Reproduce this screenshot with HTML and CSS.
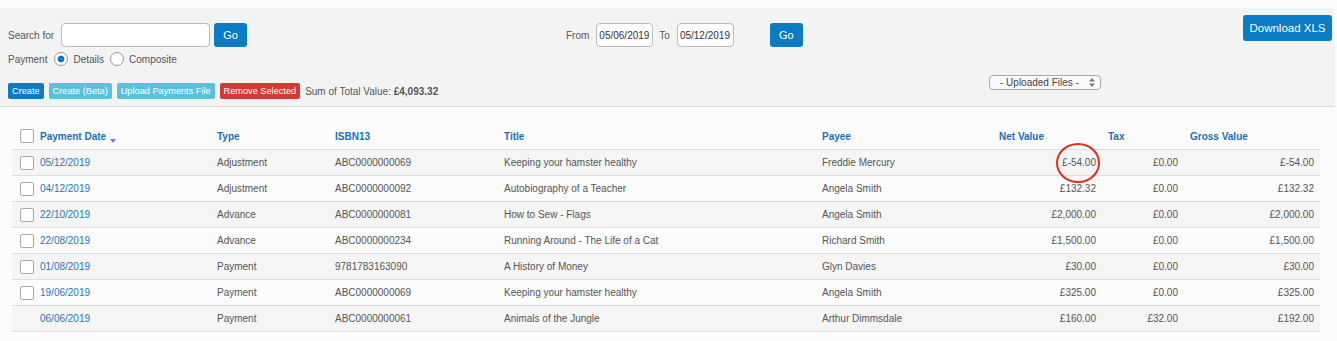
FILE: index.html
```html
<!DOCTYPE html>
<html lang="en">

<head>
    <meta charset="UTF-8" />
    <meta name="viewport" content="width=device-width, initial-scale=1.0" />
    <title>Payments</title>
    <link rel="stylesheet" href="styles.css">
</head>

<body>
    <div class="panel">
        <div class="panel-top">
            <div class="search-block">
                <div class="search-row">
                    <label class="lbl">Search for</label>
                    <input type="text" class="search-input">
                    <button class="go">Go</button>
                </div>
                <div class="payment-row">
                    <span class="lbl">Payment</span>
                    <span class="radio checked"></span>
                    <span class="radio-label">Details</span>
                    <span class="radio"></span>
                    <span class="radio-label">Composite</span>
                </div>
            </div>
            <div class="date-block">
                <span class="lbl">From</span>
                <input type="text" class="date-input" value="05/06/2019">
                <span class="lbl">To</span>
                <input type="text" class="date-input" value="05/12/2019">
                <button class="go go-dates">Go</button>
            </div>
            <button class="download">Download XLS</button>
        </div>
        <div class="panel-bottom">
            <div class="actions">
                <button class="btn create">Create</button>
                <button class="btn info">Create (Beta)</button>
                <button class="btn info">Upload Payments File</button>
                <button class="btn remove">Remove Selected</button>
                <span class="sum">Sum of Total Value: <b>£4,093.32</b></span>
            </div>
            <div class="uploaded">
                <span>- Uploaded Files -</span>
                <svg width="6" height="9" viewBox="0 0 6 9"><path d="M3 0L6 3.5H0z M3 9L0 5.5H6z" fill="#777"/></svg>
            </div>
        </div>
    </div>

    <table class="payments">
        <colgroup>
            <col style="width:199px">
            <col style="width:118px">
            <col style="width:169px">
            <col style="width:318px">
            <col style="width:177px">
            <col style="width:109px">
            <col style="width:82px">
            <col style="width:136px">
        </colgroup>
        <thead>
            <tr>
                <th class="first"><span class="check"></span>Payment Date <span class="sort"></span></th>
                <th>Type</th>
                <th>ISBN13</th>
                <th>Title</th>
                <th>Payee</th>
                <th>Net Value</th>
                <th>Tax</th>
                <th>Gross Value</th>
            </tr>
        </thead>
        <tbody>
            <tr>
                <td class="first"><span class="check"></span><a href="#">05/12/2019</a></td>
                <td>Adjustment</td>
                <td>ABC0000000069</td>
                <td>Keeping your hamster healthy</td>
                <td>Freddie Mercury</td>
                <td class="num marked">£-54.00<span class="ring"></span></td>
                <td class="num">£0.00</td>
                <td class="num">£-54.00</td>
            </tr>
            <tr>
                <td class="first"><span class="check"></span><a href="#">04/12/2019</a></td>
                <td>Adjustment</td>
                <td>ABC0000000092</td>
                <td>Autobiography of a Teacher</td>
                <td>Angela Smith</td>
                <td class="num">£132.32</td>
                <td class="num">£0.00</td>
                <td class="num">£132.32</td>
            </tr>
            <tr>
                <td class="first"><span class="check"></span><a href="#">22/10/2019</a></td>
                <td>Advance</td>
                <td>ABC0000000081</td>
                <td>How to Sew - Flags</td>
                <td>Angela Smith</td>
                <td class="num">£2,000.00</td>
                <td class="num">£0.00</td>
                <td class="num">£2,000.00</td>
            </tr>
            <tr>
                <td class="first"><span class="check"></span><a href="#">22/08/2019</a></td>
                <td>Advance</td>
                <td>ABC0000000234</td>
                <td>Running Around - The Life of a Cat</td>
                <td>Richard Smith</td>
                <td class="num">£1,500.00</td>
                <td class="num">£0.00</td>
                <td class="num">£1,500.00</td>
            </tr>
            <tr>
                <td class="first"><span class="check"></span><a href="#">01/08/2019</a></td>
                <td>Payment</td>
                <td>9781783163090</td>
                <td>A History of Money</td>
                <td>Glyn Davies</td>
                <td class="num">£30.00</td>
                <td class="num">£0.00</td>
                <td class="num">£30.00</td>
            </tr>
            <tr>
                <td class="first"><span class="check"></span><a href="#">19/06/2019</a></td>
                <td>Payment</td>
                <td>ABC0000000069</td>
                <td>Keeping your hamster healthy</td>
                <td>Angela Smith</td>
                <td class="num">£325.00</td>
                <td class="num">£0.00</td>
                <td class="num">£325.00</td>
            </tr>
            <tr>
                <td class="first"><span class="check blank"></span><a href="#">06/06/2019</a></td>
                <td>Payment</td>
                <td>ABC0000000061</td>
                <td>Animals of the Jungle</td>
                <td>Arthur Dimmsdale</td>
                <td class="num">£160.00</td>
                <td class="num">£32.00</td>
                <td class="num">£192.00</td>
            </tr>
        </tbody>
    </table>
</body>

</html>
```

FILE: styles.css
```css
body {
    margin: 0;
    background-color: #fcfcfc;
    font-family: "Liberation Sans", Arial, sans-serif;
    font-size: 10px;
    color: #555;
}

.panel {
    margin: 8px 2px 0 0;
    padding: 7px 3px 7px 8px;
    background-color: #f3f3f3;
    border-bottom: 1px solid #dadada;
    border-radius: 0 4px 0 0;
}

.panel-top {
    display: flex;
    align-items: flex-start;
}

.search-block {
    margin-top: 8px;
    width: 558px;
}

.search-row,
.payment-row,
.date-block {
    display: flex;
    align-items: center;
}

.lbl {
    margin-right: 7px;
}

.search-input {
    box-sizing: border-box;
    width: 149px;
    height: 24px;
    margin: 0 4px 0 0;
    border: 1px solid #bbb;
    border-radius: 4px;
    background: #fff;
}

.go {
    width: 33px;
    height: 24px;
    padding: 0;
    border: none;
    border-radius: 3px;
    background-color: #0a7bc4;
    color: white;
    font-family: inherit;
    font-size: 11px;
}

.payment-row {
    margin-top: 5px;
    height: 14px;
}

.payment-row .lbl {
    margin-right: 7px;
}

.radio {
    box-sizing: border-box;
    width: 14px;
    height: 14px;
    border: 1px solid #999;
    border-radius: 50%;
    background: #fff;
    margin-right: 5px;
}

.radio.checked {
    background: radial-gradient(circle, #0a7bc4 0 3.2px, #fff 3.7px);
}

.radio-label {
    margin-right: 6px;
}

.date-block {
    margin-top: 8px;
}

.date-input {
    box-sizing: border-box;
    width: 57px;
    height: 24px;
    margin: 0 6px 0 0;
    padding: 0 2px;
    border: 1px solid #bbb;
    border-radius: 4px;
    background: #fff;
    color: #333;
    font-family: inherit;
    font-size: 10px;
}

.date-block .lbl {
    margin-right: 7px;
}

.go-dates {
    margin-left: 30px;
}

.download {
    margin-left: auto;
    width: 89px;
    height: 26px;
    padding: 0;
    border: none;
    border-radius: 3px;
    background-color: #0a7bc4;
    color: white;
    font-family: inherit;
    font-size: 11.5px;
}

.panel-bottom {
    display: flex;
    margin-top: 9px;
    height: 24px;
}

.actions {
    display: flex;
    align-items: center;
    align-self: flex-end;
    width: 981px;
}

.btn {
    height: 16px;
    margin-right: 5px;
    padding: 0 4px;
    border: none;
    border-radius: 2px;
    color: white;
    font-family: inherit;
    font-size: 9.2px;
}

.create {
    background-color: #0a7bc4;
}

.info {
    background-color: #5bc0de;
}

.remove {
    background-color: #d33a34;
}

.sum {
    margin-left: 0;
}

.sum b {
    color: #555;
}

.uploaded {
    box-sizing: border-box;
    display: flex;
    align-items: center;
    justify-content: space-between;
    width: 112px;
    height: 15px;
    padding: 0 5px 0 10px;
    border: 1px solid #aaa;
    border-radius: 4px;
    background: #fafafa;
    color: #444;
}

.payments {
    table-layout: fixed;
    border-collapse: collapse;
    width: 1308px;
    margin: 12px 0 0 12px;
}

.payments th,
.payments td {
    padding: 0 6px;
    text-align: left;
    white-space: nowrap;
    line-height: 14px;
}

.payments th {
    padding-top: 11px;
    padding-bottom: 5px;
    color: #1a6fbd;
    font-weight: bold;
    border-bottom: 1px solid #ddd;
}

.payments td {
    height: 25px;
    border-bottom: 1px solid #ddd;
}

.payments tbody tr:nth-child(odd) {
    background-color: #f5f5f5;
}

.payments .first {
    padding-left: 8px;
}

.payments .num {
    text-align: right;
}

.check {
    box-sizing: border-box;
    display: inline-block;
    width: 14px;
    height: 14px;
    margin-right: 6px;
    border: 1px solid #aaa;
    border-radius: 2px;
    background: #fff;
    vertical-align: middle;
}

.check.blank {
    border-color: transparent;
    background: transparent;
}

th .check {
    position: relative;
    top: -1px;
}

.sort {
    display: inline-block;
    width: 0;
    height: 0;
    margin-left: 1px;
    border-left: 3px solid transparent;
    border-right: 3px solid transparent;
    border-top: 4px solid #7777d6;
    vertical-align: -3px;
}

.payments a {
    color: #1f78c1;
    text-decoration: none;
    vertical-align: middle;
}

.marked {
    position: relative;
}

.ring {
    position: absolute;
    right: 2px;
    top: -7px;
    box-sizing: border-box;
    width: 44px;
    height: 40px;
    border: 2px solid #e52b1e;
    border-radius: 50%;
}
```
